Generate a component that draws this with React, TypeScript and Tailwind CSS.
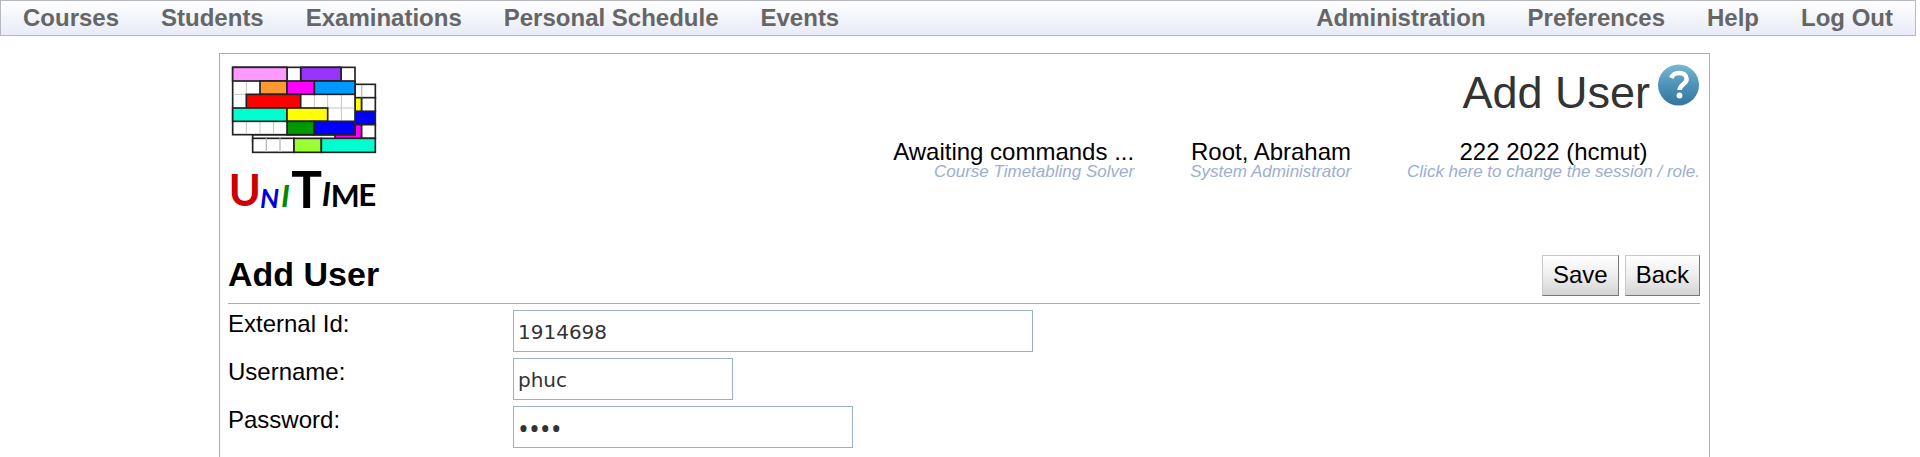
import { useState, type ReactNode } from "react";

const leftMenu = ["Courses", "Students", "Examinations", "Personal Schedule", "Events"];
const rightMenu = ["Administration", "Preferences", "Help", "Log Out"];

type Block = [x: number, y: number, w: number, h: number, fill: string];

const backBlocks: Block[] = [
  [420, 118, 61, 42, "#fff"],
  [420, 158, 20, 42, "#ff0"],
  [440, 158, 41, 42, "#fff"],
  [420, 199, 61, 40, "#00f"],
  [360, 239, 80, 41, "#f0f"],
  [440, 239, 41, 41, "#fff"],
  [113, 280, 124, 42, "#fff"],
  [237, 280, 82, 42, "#9f3"],
  [319, 280, 162, 42, "#00ffcf"],
];

const frontBlocks: Block[] = [
  [53, 67, 163, 41, "#f9f"],
  [258, 67, 120, 41, "#93f"],
  [135, 108, 81, 40, "#f93"],
  [216, 108, 82, 40, "#f0f"],
  [298, 108, 122, 40, "#0099ff"],
  [94, 148, 163, 41, "#f00"],
  [53, 189, 163, 40, "#00ffcf"],
  [216, 189, 122, 40, "#ff0"],
  [216, 229, 82, 40, "#090"],
  [298, 229, 122, 40, "#00f"],
];

function Blocks({ items }: { items: Block[] }) {
  return (
    <g stroke="#222" strokeWidth="5">
      {items.map(([x, y, w, h, fill]) => (
        <rect key={`${x}-${y}`} x={x} y={y} width={w} height={h} fill={fill} />
      ))}
    </g>
  );
}

function Logo() {
  return (
    <svg viewBox="39 57 456 480" className="h-[160px] w-[152px]" role="img" aria-label="UniTime">
      <path d="M113 269h307v20H113z" fill="#fff" stroke="#222" strokeWidth="5" />
      <Blocks items={backBlocks} />
      <path d="M154 280v40M195 280v40M440 120v37" stroke="#bbb" strokeWidth="4" />
      <rect x="53" y="67" width="367" height="202" fill="#fff" stroke="#222" strokeWidth="5" />
      <path
        d="M94 69v198M135 69v198M176 69v198M257 69v198M298 69v198M338 69v198M379 69v198M55 108h363M55 148h363M55 189h363M55 229h363"
        stroke="#c4c4c4"
        strokeWidth="3"
      />
      <path d="M216 67v41M257 67v41M378 67v41" stroke="#222" strokeWidth="5" />
      <Blocks items={frontBlocks} />
      <g className="font-['Lato',sans-serif] font-bold">
        <text x="41" y="482" fontSize="130" fill="#c00">U</text>
        <text x="135" y="488" fontSize="80" className="italic" fill="#00d">N</text>
        <text x="198" y="486" fontSize="94" className="italic" fill="#080">I</text>
        <text x="229" y="488" fontSize="154" fill="#000">T</text>
        <text x="320" y="484" fontSize="98" className="italic" fill="#000">I</text>
        <text x="347" y="486" fontSize="92" fill="#000">M</text>
        <text x="430" y="482" fontSize="94" fill="#000">E</text>
      </g>
    </svg>
  );
}

function HelpIcon() {
  return (
    <svg viewBox="0 0 42 42" className="size-[42px]" aria-hidden="true">
      <defs>
        <linearGradient id="help-fill" x1="0" y1="0" x2="0" y2="1">
          <stop offset="0" stopColor="#7ab8d3" />
          <stop offset="0.5" stopColor="#4e92b9" />
          <stop offset="1" stopColor="#35749c" />
        </linearGradient>
      </defs>
      <circle cx="20.5" cy="21" r="20.5" fill="url(#help-fill)" />
      <path d="M13.500 14C14.500 10.500 17.500 9 21 9c4.600 0 7.600 2.300 7.600 6 0 5.500-7 5.500-7 11" fill="none" stroke="#fff" strokeWidth="4.600" />
      <circle cx="21.500" cy="31.500" r="2.900" fill="#fff" />
    </svg>
  );
}

function Menu({ items }: { items: string[] }) {
  return (
    <ul className="flex gap-[42px]">
      {items.map((item) => (
        <li key={item}>
          <a href="#" className="whitespace-nowrap">{item}</a>
        </li>
      ))}
    </ul>
  );
}

function Info({ title, note, className }: { title: string; note: string; className: string }) {
  return (
    <div className={`flex flex-col whitespace-nowrap ${className}`}>
      <span className="text-2xl leading-6">{title}</span>
      <span className="text-[17px] leading-4 text-[#9caed0] italic">{note}</span>
    </div>
  );
}

function ActionButton({ children }: { children: ReactNode }) {
  return (
    <button
      type="button"
      className="h-[41px] border border-t-[#c8c8c8] border-r-[#777] border-b-[#777] border-l-[#c8c8c8] bg-linear-to-b from-white via-[#eee] to-[#d4d4d4] px-[10px] pb-0.5 text-2xl leading-7"
    >
      {children}
    </button>
  );
}

interface FieldProps {
  id: string;
  label: string;
  type?: string;
  initial: string;
  className: string;
}

function Field({ id, label, type = "text", initial, className }: FieldProps) {
  const [value, setValue] = useState(initial);
  return (
    <div className="flex">
      <label htmlFor={id} className="w-[285px] shrink-0 text-2xl leading-7">{label}</label>
      <input
        id={id}
        type={type}
        value={value}
        onChange={(e) => setValue(e.target.value)}
        className={`h-[42px] border border-[#9caed0] px-1 pt-0.5 text-[#333] ${className}`}
      />
    </div>
  );
}

export default function App() {
  return (
    <div className="overflow-x-hidden bg-white font-['Liberation_Sans',Arial,sans-serif] text-black">
      <nav className="mr-1 flex h-9 items-center justify-between border border-[#b8b8c0] bg-linear-to-b from-white to-[#e8ebf7] px-[22px] text-2xl leading-7 font-bold text-[#666]">
        <Menu items={leftMenu} />
        <Menu items={rightMenu} />
      </nav>

      <main className="mt-[17px] mr-[210px] ml-[219px] border border-b-0 border-[#9caed0] pr-[9px] pb-3 pl-2">
        <header className="flex items-start justify-between pt-[10px]">
          <Logo />
          <div className="flex flex-col items-end">
            <div className="flex items-start gap-2">
              <h1 className="pt-1 text-[45px] leading-[50px] text-[#333]">Add User</h1>
              <a href="#" aria-label="Help"><HelpIcon /></a>
            </div>
            <div className="mt-[22px] flex gap-14">
              <Info title="Awaiting commands ..." note="Course Timetabling Solver" className="items-end" />
              <Info title="Root, Abraham" note="System Administrator" className="items-end" />
              <Info title="222 2022 (hcmut)" note="Click here to change the session / role." className="items-center" />
            </div>
          </div>
        </header>

        <form onSubmit={(e) => e.preventDefault()}>
          <div className="mt-[31px] flex items-start justify-between border-b border-[#9caed0] pb-[7px]">
            <h2 className="text-[34px] leading-[38px] font-bold">Add User</h2>
            <div className="flex gap-[6px]">
              <ActionButton>Save</ActionButton>
              <ActionButton>Back</ActionButton>
            </div>
          </div>
          <div className="mt-[6px] flex flex-col gap-[6px]">
            <Field id="external-id" label="External Id:" initial="1914698" className="w-[520px] font-['DejaVu_Sans',sans-serif] text-xl" />
            <Field id="username" label="Username:" initial="phuc" className="w-[220px] font-['DejaVu_Sans',sans-serif] text-xl" />
            <Field id="password" label="Password:" type="password" initial="phuc" className="w-[340px] font-['Open_Sans',sans-serif] text-[29px]" />
          </div>
        </form>
      </main>
    </div>
  );
}
